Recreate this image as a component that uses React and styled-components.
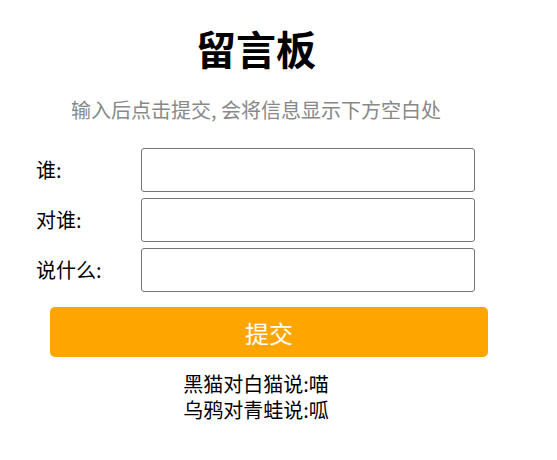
import React, { useState } from "react";
import styled, { createGlobalStyle } from "styled-components";

const GlobalStyle = createGlobalStyle`
  body {
    margin: 8px;
    background: #fff;
    font-family: "Noto Sans CJK SC", "Noto Sans", sans-serif;
    color: #000;
  }
`;

const Board = styled.div`
  width: 496px;
  display: flex;
  flex-direction: column;
`;

const Title = styled.h1`
  margin: 16px 0 0 0;
  font-size: 40px;
  line-height: 48px;
  font-weight: 700;
  text-align: center;
`;

const Hint = styled.p`
  margin: 25px 0 0 0;
  font-size: 20px;
  line-height: 26px;
  color: #888;
  text-align: center;
`;

const Form = styled.form`
  display: flex;
  flex-direction: column;
  gap: 6px;
  margin-top: 25px;
  padding-left: 28px;
`;

const Row = styled.div`
  display: flex;
  align-items: center;
`;

const Label = styled.label`
  width: 105px;
  font-size: 20px;
  line-height: 26px;
`;

const Input = styled.input`
  box-sizing: border-box;
  width: 334px;
  height: 44px;
  border: 1px solid #767676;
  border-radius: 3px;
  padding: 0 8px;
  font-size: 18px;
  font-family: inherit;
  outline: none;
`;

const SubmitButton = styled.button`
  box-sizing: border-box;
  margin: 15px 16px 0 42px;
  height: 50px;
  border: none;
  border-radius: 5px;
  background: #ffa500;
  color: #fff;
  font-family: inherit;
  font-size: 24px;
  cursor: pointer;
`;

const Messages = styled.div`
  margin-top: 14px;
  display: flex;
  flex-direction: column;
  align-items: center;
  font-size: 20px;
  line-height: 26px;
`;

const Message = styled.div`
  white-space: nowrap;
`;

const fields = [
  { key: "from", label: "谁:" },
  { key: "to", label: "对谁:" },
  { key: "msg", label: "说什么:" },
];

export default function App() {
  const [form, setForm] = useState({ from: "", to: "", msg: "" });
  const [list, setList] = useState([
    { from: "黑猫", to: "白猫", msg: "喵" },
    { from: "乌鸦", to: "青蛙", msg: "呱" },
  ]);

  const submit = (e) => {
    e.preventDefault();
    if (!form.from || !form.to || !form.msg) return;
    setList([...list, form]);
    setForm({ from: "", to: "", msg: "" });
  };

  return (
    <Board>
      <GlobalStyle />
      <Title>留言板</Title>
      <Hint>输入后点击提交, 会将信息显示下方空白处</Hint>
      <Form onSubmit={submit}>
        {fields.map((f) => (
          <Row key={f.key}>
            <Label>{f.label}</Label>
            <Input
              value={form[f.key]}
              onChange={(e) => setForm({ ...form, [f.key]: e.target.value })}
            />
          </Row>
        ))}
      </Form>
      <SubmitButton onClick={submit}>提交</SubmitButton>
      <Messages>
        {list.map((m, i) => (
          <Message key={i}>
            {m.from}对{m.to}说:{m.msg}
          </Message>
        ))}
      </Messages>
    </Board>
  );
}
